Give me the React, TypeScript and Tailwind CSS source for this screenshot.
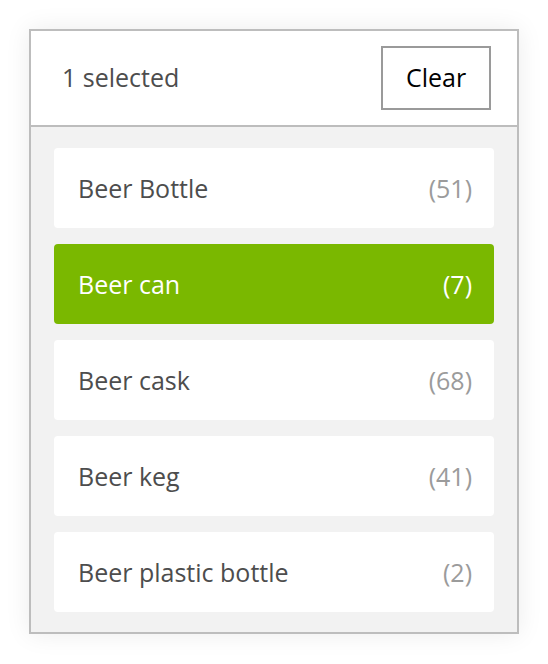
import React, { useState } from 'react';

const items = [
  { name: 'Beer Bottle', count: 51 },
  { name: 'Beer can', count: 7 },
  { name: 'Beer cask', count: 68 },
  { name: 'Beer keg', count: 41 },
  { name: 'Beer plastic bottle', count: 2 },
];

export default function App() {
  const [selected, setSelected] = useState<string[]>(['Beer can']);

  const toggle = (name: string) =>
    setSelected((s) => (s.includes(name) ? s.filter((n) => n !== name) : [...s, name]));

  return (
    <div className="min-h-screen bg-white pt-[29px] pl-[29px] font-['Open_Sans',sans-serif]">
      <div className="w-[490px] border-2 border-[#bdbdbd] bg-white shadow-[0_0_24px_rgba(0,0,0,0.08)]">
        {/* header */}
        <div className="flex h-[96px] items-center justify-between border-b-2 border-[#bdbdbd] pl-[31px] pr-[26px]">
          <span className="text-[25px] text-[#4d4d4d]">{selected.length} selected</span>
          <button
            onClick={() => setSelected([])}
            className="h-[64px] w-[110px] border-2 border-[#9a9a9a] bg-white text-[25px] text-black"
          >
            Clear
          </button>
        </div>

        {/* options */}
        <div className="flex flex-col gap-4 bg-[#f2f2f2] px-[23px] pt-[21px] pb-[20px]">
          {items.map((item) => {
            const active = selected.includes(item.name);
            return (
              <button
                key={item.name}
                onClick={() => toggle(item.name)}
                className={`flex h-20 items-center justify-between rounded pl-6 pr-[22px] pt-[2px] text-[25px] ${
                  active ? 'bg-[#7ab800] text-white' : 'bg-white text-[#4d4d4d]'
                }`}
              >
                <span>{item.name}</span>
                <span className={active ? 'text-white' : 'text-[#9b9b9b]'}>({item.count})</span>
              </button>
            );
          })}
        </div>
      </div>
    </div>
  );
}
